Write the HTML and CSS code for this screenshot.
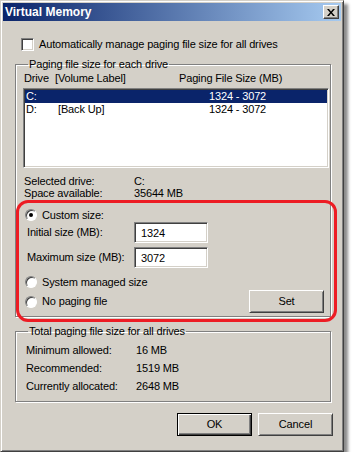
FILE: index.html
```html
<!DOCTYPE html>
<html lang="en">
<head>
    <meta charset="UTF-8">
    <title>Virtual Memory</title>
    <link rel="stylesheet" href="styles.css">
</head>
<body>
    <div class="window">
        <div class="titlebar">
            <span class="title">Virtual Memory</span>
            <span class="close-btn">
                <svg width="8" height="7" viewBox="0 0 8 7"><path d="M0 0h2l2 2.5L6 0h2L5 3.5 8 7H6L4 4.5 2 7H0l3-3.5z" fill="#000"/></svg>
            </span>
        </div>
        <div class="client">
            <div class="check-row">
                <span class="checkbox"></span>
                <span>Automatically manage paging file size for all drives</span>
            </div>

            <fieldset class="group group-drives">
                <legend>Paging file size for each drive</legend>
                <div class="list-head">
                    <span>Drive</span>
                    <span>[Volume Label]</span>
                    <span>Paging File Size (MB)</span>
                </div>
                <div class="listbox">
                    <div class="list-row selected">
                        <span>C:</span>
                        <span></span>
                        <span>1324 - 3072</span>
                    </div>
                    <div class="list-row">
                        <span>D:</span>
                        <span>[Back Up]</span>
                        <span>1324 - 3072</span>
                    </div>
                </div>
                <div class="info">
                    <span>Selected drive:</span><span>C:</span>
                    <span>Space available:</span><span>35644 MB</span>
                </div>
                <div class="custom">
                    <div class="radio-row">
                        <span class="radio checked"></span>
                        <span>Custom size:</span>
                    </div>
                    <div class="field-row">
                        <label for="initial">Initial size (MB):</label>
                        <input id="initial" class="textbox" type="text" value="1324">
                    </div>
                    <div class="field-row">
                        <label for="maximum">Maximum size (MB):</label>
                        <input id="maximum" class="textbox" type="text" value="3072">
                    </div>
                    <div class="radio-row system">
                        <span class="radio"></span>
                        <span>System managed size</span>
                    </div>
                    <div class="last-row">
                        <div class="radio-row">
                            <span class="radio"></span>
                            <span>No paging file</span>
                        </div>
                        <button class="btn set-btn">Set</button>
                    </div>
                    <div class="highlight"></div>
                </div>
            </fieldset>

            <fieldset class="group group-total">
                <legend>Total paging file size for all drives</legend>
                <div class="totals">
                    <span>Minimum allowed:</span><span>16 MB</span>
                    <span>Recommended:</span><span>1519 MB</span>
                    <span>Currently allocated:</span><span>2648 MB</span>
                </div>
            </fieldset>

            <div class="buttons">
                <button class="btn default">OK</button>
                <button class="btn">Cancel</button>
            </div>
        </div>
    </div>
</body>
</html>
```

FILE: styles.css
```css
body {
    margin: 0;
    background: #fff;
    font-family: "Liberation Sans", Arial, sans-serif;
    font-size: 11px;
    line-height: 13px;
    letter-spacing: -0.15px;
    color: #000;
}
.window {
    box-sizing: border-box;
    width: 344px;
    height: 452px;
    background: #d4d0c8;
    border: 1px solid;
    border-color: #d4d0c8 #404040 #404040 #d4d0c8;
    box-shadow: inset 1px 1px #fff, inset -1px -1px #808080, 4px 4px 3px rgba(0, 0, 0, 0.45);
    padding: 2px;
}
.titlebar {
    height: 18px;
    display: flex;
    align-items: center;
    justify-content: space-between;
    padding: 0 2px 0 2px;
    background: linear-gradient(to right, #0a246a, #a6caf0);
}
.title {
    color: #fff;
    font-weight: bold;
    font-size: 12px;
    letter-spacing: 0;
}
.close-btn {
    box-sizing: border-box;
    width: 16px;
    height: 14px;
    display: flex;
    align-items: center;
    justify-content: center;
    background: #d4d0c8;
    border: 1px solid;
    border-color: #fff #404040 #404040 #fff;
    box-shadow: inset -1px -1px #808080;
}
.client {
    padding: 17px 10px 0 12px;
}
.check-row {
    display: flex;
    align-items: center;
    height: 13px;
    padding-left: 6px;
}
.checkbox {
    box-sizing: border-box;
    width: 13px;
    height: 13px;
    margin-right: 5px;
    background: #fff;
    border: 1px solid;
    border-color: #808080 #fff #fff #808080;
    box-shadow: inset 1px 1px #404040, inset -1px -1px #d4d0c8;
}
.group {
    margin: 0;
    border: 1px solid #808080;
    box-shadow: inset 1px 1px #fff, 1px 1px #fff;
    padding: 0 1px 0 7px;
    min-width: 0;
}
.group legend {
    padding: 0 1px;
    margin-left: 5px;
    line-height: 13px;
}
.group-drives {
    margin-top: 7px;
    padding-top: 1px;
    padding-bottom: 3px;
}
.list-head {
    display: grid;
    grid-template-columns: 31px 124px 1fr;
    padding-left: 1px;
    height: 13px;
}
.listbox {
    box-sizing: border-box;
    height: 80px;
    margin-top: 3px;
    background: #fff;
    border: 1px solid;
    border-color: #808080 #fff #fff #808080;
    box-shadow: inset 1px 1px #404040, inset -1px -1px #d4d0c8;
    padding: 1px;
}
.list-row {
    display: grid;
    grid-template-columns: 32px 151px 1fr;
    height: 13px;
    padding-left: 1px;
}
.list-row.selected {
    background: #0a246a;
    color: #fff;
}
.info {
    display: grid;
    grid-template-columns: 110px 1fr;
    line-height: 12px;
    margin-top: 7px;
    padding-left: 1px;
}
.custom {
    position: relative;
    margin-top: 10px;
}
.radio-row {
    display: flex;
    align-items: center;
    height: 12px;
    padding-left: 2px;
}
.radio {
    position: relative;
    box-sizing: border-box;
    width: 12px;
    height: 12px;
    margin-right: 5px;
    border-radius: 50%;
    background: #fff;
    border: 1px solid;
    border-color: #808080 #fff #fff #808080;
    box-shadow: inset 1px 1px #404040;
}
.radio.checked::after {
    content: "";
    position: absolute;
    left: 3px;
    top: 3px;
    width: 4px;
    height: 4px;
    border-radius: 50%;
    background: #000;
}
.field-row {
    display: flex;
    align-items: center;
    margin-top: 1px;
}
.field-row + .field-row {
    margin-top: 4px;
}
.field-row label {
    width: 107px;
    padding-left: 4px;
}
.textbox {
    box-sizing: border-box;
    width: 74px;
    height: 21px;
    margin: 0;
    padding: 0 6px;
    font: inherit;
    letter-spacing: inherit;
    background: #fff;
    border: 1px solid;
    border-color: #808080 #fff #fff #808080;
    box-shadow: inset 1px 1px #404040, inset -1px -1px #d4d0c8;
    outline: none;
}
.radio-row.system {
    margin-top: 8px;
}
.last-row {
    display: flex;
    align-items: center;
    justify-content: space-between;
    margin-top: 2px;
    padding-right: 5px;
}
.btn {
    box-sizing: border-box;
    width: 75px;
    height: 23px;
    margin: 0;
    padding: 0;
    font: inherit;
    letter-spacing: inherit;
    color: #000;
    background: #d4d0c8;
    border: 1px solid;
    border-color: #fff #404040 #404040 #fff;
    box-shadow: inset 1px 1px #d4d0c8, inset -1px -1px #808080;
}
.btn.default {
    border: 1px solid #000;
    box-shadow: inset 1px 1px #fff, inset -1px -1px #404040, inset -2px -2px #808080;
}
.highlight {
    position: absolute;
    left: -7px;
    top: -9px;
    width: 321px;
    height: 122px;
    box-sizing: border-box;
    border: 3px solid #ed1c24;
    border-radius: 12px;
    pointer-events: none;
}
.group-total {
    margin-top: 8px;
    padding-top: 3px;
    padding-bottom: 6px;
}
.totals {
    display: grid;
    grid-template-columns: 110px 1fr;
    line-height: 18px;
    padding-left: 3px;
}
.buttons {
    display: flex;
    justify-content: flex-end;
    gap: 6px;
    margin-top: 11px;
    margin-right: -2px;
}
```
